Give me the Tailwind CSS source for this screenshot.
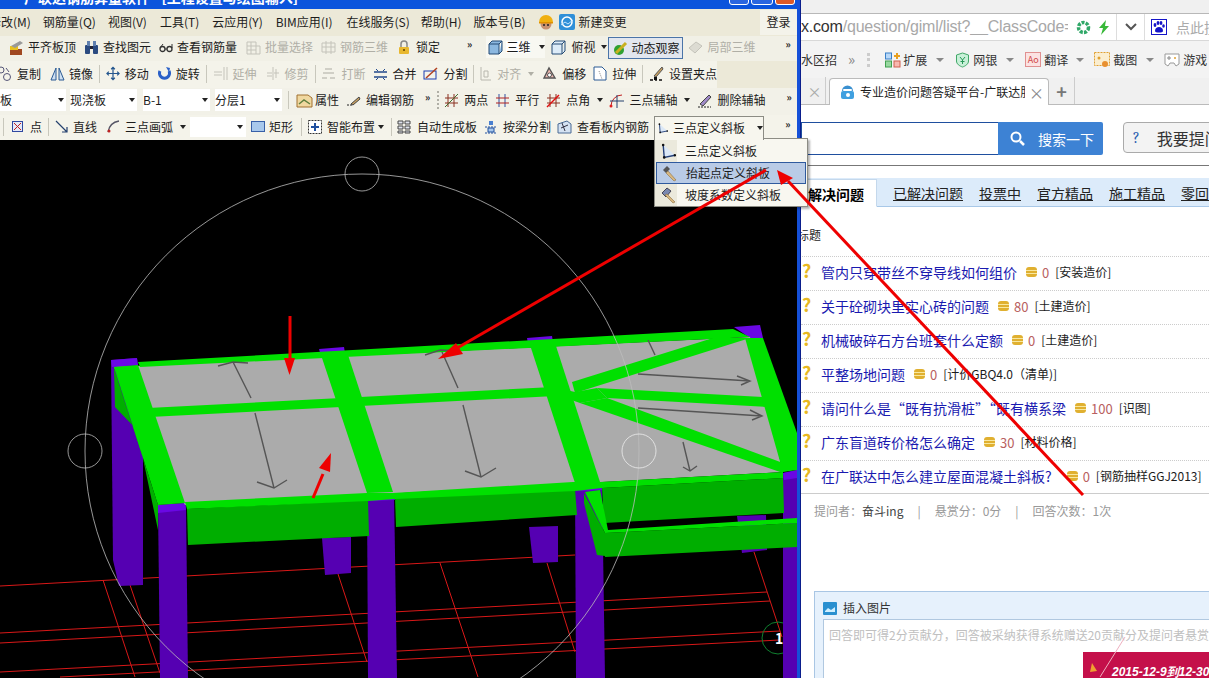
<!DOCTYPE html>
<html lang="zh">

<head>
    <meta charset="UTF-8">
    <title>广联达钢筋算量 - 三点定义斜板</title>
    <script src="https://cdn.jsdelivr.net/npm/@tailwindcss/browser@4"></script>
</head>

<body class="bg-black">
    <div class="relative flex w-[1209px] h-[678px] overflow-hidden text-[12px] leading-none text-[#1c1c1c] whitespace-nowrap font-['Noto_Sans_CJK_SC','Liberation_Sans',sans-serif]">

        <!-- left: drawing program -->
        <div class="flex flex-col w-[797px] shrink-0 bg-black">
            <div class="h-[9px] bg-[#0b54dc] overflow-hidden flex justify-between pr-[2px]">
                <span class="pl-[24px] -mt-[10px] text-[14px] font-bold text-white">广联达钢筋算量软件 - [工程设置与绘图输入]</span>
                <div class="flex gap-[2px] -mt-[6px]">
                    <span class="w-[20px] h-[11px] rounded-[3px] border border-white bg-[#2a66e0]"></span>
                    <span class="w-[22px] h-[11px] rounded-[3px] border border-white bg-[#2a66e0]"></span>
                    <span class="w-[20px] h-[11px] rounded-[3px] border border-white bg-[#dc5a28]"></span>
                </div>
            </div>

            <!-- menu -->
            <div class="h-[27px] bg-[#ece9d8] flex items-center gap-[12px] -ml-[11px] pb-[1px]">
                <span>修改(M)</span><span>钢筋量(Q)</span><span>视图(V)</span><span class="ml-px">工具(T)</span><span class="ml-px">云应用(Y)</span><span class="ml-px">BIM应用(I)</span><span class="ml-[2px]">在线服务(S)</span><span class="-ml-px">帮助(H)</span><span>版本号(B)</span>
                <svg class="w-[16px] h-[16px] shrink-0" viewBox="0 0 16 16"><circle cx="8" cy="10" r="5.500" fill="#c89070"/><path d="M1 8a7 7 0 0 1 14 0z" fill="#f0b010"/><path d="M1 8h14v1.500H1z" fill="#e09000"/><circle cx="6" cy="11" r="1" fill="#222"/><circle cx="10" cy="11" r="1" fill="#222"/></svg>
                <span class="flex items-center gap-[4px] -ml-[7px]">
                    <svg class="w-[16px] h-[16px]" viewBox="0 0 16 16"><rect width="16" height="16" rx="2" fill="#2f8fd8"/><circle cx="8" cy="8" r="5" fill="none" stroke="#fff" stroke-width="1.500"/><path d="M2 11l4-3 3 2 5-4" stroke="#bfe4ff" fill="none"/></svg>
                    新建变更
                </span>
                <span class="ml-auto bg-[#f4f3ea] h-[25px] w-[37px] flex items-center justify-center">登录</span>
            </div>

            <!-- row 2 -->
            <div class="h-[25px] bg-[#f1f0e6] flex items-center gap-[9px] pl-[8px] pb-[3px]">
                <span class="flex items-center gap-[4px]"><svg class="w-[16px] h-[15px]" viewBox="0 0 16 15"><rect x="2" y="9" width="12" height="6" fill="#a04820"/><rect x="2" y="6" width="8" height="4" fill="#e8c020"/><path d="M3 6l9-5 3 2-8 5z" fill="#9a9a9a"/></svg>平齐板顶</span>
                <span class="flex items-center gap-[4px] -ml-px"><svg class="w-[15px] h-[15px]" viewBox="0 0 15 15"><rect x="1" y="5" width="5" height="9" rx="1" fill="#2a4a80"/><rect x="9" y="5" width="5" height="9" rx="1" fill="#2a4a80"/><rect x="3" y="1" width="3" height="5" fill="#6080b0"/><rect x="9" y="1" width="3" height="5" fill="#6080b0"/><rect x="6" y="6" width="3" height="3" fill="#223"/></svg>查找图元</span>
                <span class="flex items-center gap-[4px] -ml-px"><svg class="w-[14px] h-[15px]" viewBox="0 0 14 15"><circle cx="3.500" cy="9" r="2.500" fill="none" stroke="#333" stroke-width="1.300"/><circle cx="10.500" cy="9" r="2.500" fill="none" stroke="#333" stroke-width="1.300"/><path d="M6 9h2M1 8l3-4M13 8V4" stroke="#333" fill="none"/></svg>查看钢筋量</span>
                <span class="flex items-center gap-[4px] text-[#b0afa6]"><svg class="w-[15px] h-[15px]" viewBox="0 0 15 15"><path d="M1 2h9v12H1zM1 6h9M1 10h9M5 2v12M10 6h4v8h-4" fill="none" stroke="#c4c3ba"/></svg>批量选择</span>
                <span class="flex items-center gap-[4px] text-[#b0afa6] -ml-px"><svg class="w-[15px] h-[15px]" viewBox="0 0 15 15"><path d="M1 3h13v9H1zM5 1v13M10 1v13M1 7h13" fill="none" stroke="#c4c3ba"/></svg>钢筋三维</span>
                <span class="flex items-center gap-[5px]"><svg class="w-[14px] h-[15px]" viewBox="0 0 14 15"><path d="M4 7V4a3 3 0 0 1 6 0v3" fill="none" stroke="#888" stroke-width="1.500"/><rect x="2" y="7" width="10" height="7" rx="1" fill="#e8b830"/><circle cx="7" cy="10" r="1" fill="#604000"/></svg>锁定</span>
                <span class="ml-[18px] text-[10px] font-bold -mt-[6px]">»</span>
                <div class="flex items-center h-[22px] bg-[#f8f8f2] ml-[5px] pl-[2px] gap-[9px]">
                    <span class="flex items-center gap-[3px]"><svg class="w-[15px] h-[15px]" viewBox="0 0 15 15"><path d="M1 4h10v10H1zM1 4l3-3h10l-3 3M11 14l3-3V1" fill="#8cb8e0" stroke="#244a74"/></svg><span class="bg-white">三维</span></span>
                    <span class="w-0 h-0 border-x-[3px] border-x-transparent border-t-[4px] border-t-[#222]"></span>
                </div>
                <span class="flex items-center gap-[5px] -ml-[3px]"><svg class="w-[15px] h-[15px]" viewBox="0 0 15 15"><path d="M1 4h10v10H1zM1 4l3-3h10l-3 3M11 14l3-3V1" fill="#dcebf8" stroke="#244a74"/></svg>俯视</span>
                <span class="w-0 h-0 border-x-[3px] border-x-transparent border-t-[4px] border-t-[#222] -ml-[3px]"></span>
                <span class="flex items-center gap-[3px] h-[22px] w-[75px] pl-[3px] mt-[2px] border border-[#4a74a8] bg-[#e2e6ee] -ml-[8px]"><svg class="w-[16px] h-[15px]" viewBox="0 0 16 15"><circle cx="7" cy="9" r="5" fill="#30a030"/><path d="M4 12L14 2" stroke="#c8b020" stroke-width="3"/></svg>动态观察</span>
                <span class="flex items-center gap-[4px] text-[#b0afa6] -ml-[4px]"><svg class="w-[15px] h-[15px]" viewBox="0 0 15 15"><path d="M1 8l7-6 6 4-7 7z" fill="#dcdbd2" stroke="#c4c3ba"/></svg>局部三维</span>
                <span class="ml-[21px] text-[10px] font-bold -mt-[6px]">»</span>
            </div>

            <!-- row 3 -->
            <div class="h-[27px] bg-[#ece9d8]">
                <div class="h-full w-[720px] bg-[#f4f3ea] flex items-center gap-[9px] -ml-[3px] pb-[2px]">
                    <span class="flex items-center gap-[5px]"><svg class="w-[15px] h-[15px]" viewBox="0 0 15 15"><circle cx="4" cy="4" r="3" fill="none" stroke="#557"/><circle cx="10" cy="11" r="3.500" fill="none" stroke="#557"/><path d="M9 2l3 4" stroke="#557"/></svg>复制</span>
                    <span class="flex items-center gap-[4px]"><svg class="w-[15px] h-[15px]" viewBox="0 0 15 15"><path d="M6 2v12H1zM9 2v12h5z" fill="#cfe0f2" stroke="#2a5a94"/></svg>镜像</span>
                    <span class="w-px h-[18px] bg-[#c8c7bc] -mx-[3px]"></span>
                    <span class="flex items-center gap-[5px]"><svg class="w-[14px] h-[15px]" viewBox="0 0 15 15"><path d="M7.500 1v13M1 7.500h13M5.500 3l2-2 2 2M5.500 12l2 2 2-2M3 5.500l-2 2 2 2M12 5.500l2 2-2 2" fill="none" stroke="#24568e" stroke-width="1.300"/></svg>移动</span>
                    <span class="flex items-center gap-[5px]"><svg class="w-[13px] h-[15px]" viewBox="0 0 13 15"><path d="M2 5a5 5 0 1 0 9 0" fill="none" stroke="#2a60c8" stroke-width="3"/><path d="M8 1l4 1-1 4z" fill="#2a60c8"/></svg>旋转</span>
                    <span class="w-px h-[18px] bg-[#c8c7bc] -mx-[3px]"></span>
                    <span class="flex items-center gap-[5px] text-[#b0afa6]"><svg class="w-[15px] h-[15px]" viewBox="0 0 15 15"><path d="M1 6h8M1 9h8M11 1v13M14 1v13" stroke="#c4c3ba" fill="none"/></svg>延伸</span>
                    <span class="flex items-center gap-[5px] text-[#b0afa6]"><svg class="w-[14px] h-[15px]" viewBox="0 0 14 15"><path d="M1 7h5M8 7h5M1 10h5M7 1v13M10 3v9" stroke="#c4c3ba" fill="none"/></svg>修剪</span>
                    <span class="w-px h-[18px] bg-[#c8c7bc] -mx-[3px]"></span>
                    <span class="flex items-center gap-[5px] text-[#b0afa6]"><svg class="w-[15px] h-[15px]" viewBox="0 0 15 15"><path d="M1 12h5M9 12h5M4 3h7M2 7h11" stroke="#c4c3ba" stroke-width="1.500" fill="none"/></svg>打断</span>
                    <span class="flex items-center gap-[4px] -ml-px"><svg class="w-[15px] h-[15px]" viewBox="0 0 15 15"><path d="M1 11h13M1 6h13" stroke="#224a8c" stroke-width="1.500"/><path d="M3 3l2 2M12 3l-2 2M3 14l2-2M12 14l-2-2" stroke="#224a8c"/></svg>合并</span>
                    <span class="flex items-center gap-[4px] -ml-[2px]"><svg class="w-[16px] h-[15px]" viewBox="0 0 16 15"><rect x="1" y="5" width="12" height="8" fill="none" stroke="#1a3cb0"/><path d="M3 12L14 2" stroke="#b04020" stroke-width="1.500"/></svg>分割</span>
                    <span class="w-px h-[18px] bg-[#c8c7bc] -mx-[3px]"></span>
                    <span class="flex items-center gap-[5px] text-[#b0afa6]"><svg class="w-[12px] h-[15px]" viewBox="0 0 12 15"><path d="M1 1v13h10M4 5h4v6H4z" stroke="#b8b7ae" fill="none"/></svg>对齐<span class="w-0 h-0 ml-[2px] border-x-[3px] border-x-transparent border-t-[4px] border-t-[#b0afa6]"></span></span>
                    <span class="flex items-center gap-[5px] -ml-px"><svg class="w-[15px] h-[15px]" viewBox="0 0 15 15"><path d="M2 12l5-10 6 10z" fill="#eeb8b0" stroke="#555" stroke-width="1.400"/><circle cx="7.500" cy="9" r="2" fill="#fff" stroke="#555"/></svg>偏移</span>
                    <span class="flex items-center gap-[4px] -ml-[2px]"><svg class="w-[15px] h-[15px]" viewBox="0 0 15 15"><path d="M1 1h8l4 4v9H1z" fill="#fff" stroke="#2a5a94"/><path d="M6 5l3 8" stroke="#888" stroke-dasharray="1 1"/></svg>拉伸</span>
                    <span class="w-px h-[18px] bg-[#c8c7bc] -mx-[3px]"></span>
                    <span class="flex items-center gap-[5px]"><svg class="w-[15px] h-[15px]" viewBox="0 0 15 15"><path d="M5 10L13 1l1 2-7 8z" fill="#c8a060" stroke="#555"/><path d="M1 14h3M6 14h2M10 14h3" stroke="#111" stroke-width="1.500"/><rect x="5" y="11" width="3" height="3" fill="#111"/></svg>设置夹点</span>
                </div>
            </div>

            <!-- row 4 -->
            <div class="h-[27px] bg-[#f2f1e8] flex items-center pb-[3px]">
                <span class="w-[66px] h-[22px] bg-white flex items-center justify-between pr-[2px] overflow-hidden"><span>板</span><span class="w-0 h-0 border-x-[3px] border-x-transparent border-t-[4px] border-t-[#222]"></span></span>
                <span class="ml-[4px] w-[67px] h-[22px] bg-white flex items-center justify-between pr-[2px]">现浇板<span class="w-0 h-0 border-x-[3px] border-x-transparent border-t-[4px] border-t-[#222]"></span></span>
                <span class="ml-[6px] w-[67px] h-[22px] bg-white flex items-center justify-between pr-[2px]">B-1<span class="w-0 h-0 border-x-[3px] border-x-transparent border-t-[4px] border-t-[#222]"></span></span>
                <span class="ml-[5px] w-[67px] h-[22px] bg-white flex items-center justify-between pr-[2px]">分层1<span class="w-0 h-0 border-x-[3px] border-x-transparent border-t-[4px] border-t-[#222]"></span></span>
                <span class="w-px h-[18px] bg-[#c8c7bc] ml-[6px]"></span>
                <span class="flex items-center gap-[2px] ml-[7px]"><svg class="w-[17px] h-[15px]" viewBox="0 0 17 15"><path d="M1 2h11l4 3v9H1z" fill="#f0d8a0" stroke="#a07030"/><path d="M3 11l5-4 6 4" stroke="#608040" fill="none" stroke-width="1.500"/></svg>属性</span>
                <span class="flex items-center gap-[5px] ml-[7px]"><svg class="w-[15px] h-[15px]" viewBox="0 0 15 15"><path d="M1 12h6" stroke="#222" stroke-dasharray="2 1"/><path d="M5 11L13 4l1 2-7 6z" fill="#c8a060" stroke="#444"/></svg>编辑钢筋</span>
                <span class="ml-[11px] text-[10px] font-bold -mt-[6px]">»</span>
                <span class="ml-[7px] w-[2px] h-[18px] border-l-2 border-dotted border-[#b0afa6]"></span>
                <span class="flex items-center gap-[5px] ml-[5px]"><svg class="w-[15px] h-[15px]" viewBox="0 0 15 15"><path d="M4 1v13M10 1v13M1 5h13M1 10h13" stroke="#8a3020"/><path d="M1 14L14 1" stroke="#407030"/></svg>两点</span>
                <span class="flex items-center gap-[5px] ml-[7px]"><svg class="w-[15px] h-[15px]" viewBox="0 0 15 15"><path d="M4 1v13M10 1v13" stroke="#3050a0"/><path d="M1 5h13M1 10h13" stroke="#b02020"/></svg>平行</span>
                <span class="flex items-center gap-[5px] ml-[7px]"><svg class="w-[15px] h-[15px]" viewBox="0 0 15 15"><path d="M4 1v13M10 1v13M1 5h13M1 10h13" stroke="#8a3020"/><path d="M1 14L13 2" stroke="#e01010" stroke-width="1.500"/></svg>点角</span>
                <span class="ml-[7px] w-0 h-0 border-x-[3px] border-x-transparent border-t-[4px] border-t-[#222]"></span>
                <span class="flex items-center gap-[5px] ml-[6px]"><svg class="w-[15px] h-[15px]" viewBox="0 0 15 15"><path d="M2 13a11 11 0 0 1 11-11" stroke="#c02020" fill="none"/><path d="M8 2v13M1 8h14" stroke="#24406e"/><circle cx="2" cy="13" r="1.500" fill="#e02020"/></svg>三点辅轴</span>
                <span class="ml-[7px] w-0 h-0 border-x-[3px] border-x-transparent border-t-[4px] border-t-[#222]"></span>
                <span class="flex items-center gap-[5px] ml-[7px]"><svg class="w-[15px] h-[15px]" viewBox="0 0 15 15"><path d="M1 14h13" stroke="#222" stroke-dasharray="2 1"/><path d="M3 11L12 2l2 2-8 9z" fill="#a08ac8" stroke="#444"/></svg>删除辅轴</span>
                <span class="ml-[21px] text-[10px] font-bold -mt-[6px]">»</span>
            </div>

            <!-- row 5 -->
            <div class="h-[25px] bg-[#f4f3ea] flex items-center pb-[2px]">
                <span class="w-px h-[18px] bg-[#c8c7bc] ml-[3px]"></span>
                <span class="flex items-center gap-[7px] ml-[8px]"><svg class="w-[11px] h-[11px]" viewBox="0 0 11 11"><rect x=".5" y=".5" width="10" height="10" fill="#e4e8f8" stroke="#3048a0"/><path d="M2 2l7 7M9 2l-7 7" stroke="#c02020"/></svg>点</span>
                <span class="w-px h-[18px] bg-[#c8c7bc] ml-[6px]"></span>
                <span class="flex items-center gap-[5px] ml-[6px]"><svg class="w-[13px] h-[13px]" viewBox="0 0 13 13"><path d="M1 1l11 11M12 7v5H7" stroke="#24406e" fill="none" stroke-width="1.200"/></svg>直线</span>
                <span class="flex items-center gap-[5px] ml-[10px]"><svg class="w-[13px] h-[13px]" viewBox="0 0 13 13"><path d="M1 12C2 6 6 2 12 1" stroke="#556" fill="none" stroke-width="1.300"/><circle cx="2" cy="11" r="1.500" fill="#c02020"/></svg>三点画弧</span>
                <span class="ml-[7px] w-0 h-0 border-x-[3px] border-x-transparent border-t-[4px] border-t-[#222]"></span>
                <span class="ml-[4px] w-[56px] h-[20px] bg-white flex items-center justify-end pr-[3px]"><span class="w-0 h-0 border-x-[3px] border-x-transparent border-t-[4px] border-t-[#222]"></span></span>
                <span class="flex items-center gap-[4px] ml-[5px]"><svg class="w-[14px] h-[11px]" viewBox="0 0 14 11"><rect x=".5" y=".5" width="13" height="10" fill="#a8c8ec" stroke="#3860a8"/></svg>矩形</span>
                <span class="w-px h-[18px] bg-[#c8c7bc] ml-[8px]"></span>
                <span class="flex items-center gap-[5px] ml-[6px]"><svg class="w-[14px] h-[14px]" viewBox="0 0 14 14"><rect x=".5" y=".5" width="13" height="13" fill="#fff" stroke="#333" stroke-dasharray="2 1"/><path d="M7 3v8M3 7h8" stroke="#2050a0" stroke-width="2"/></svg>智能布置</span>
                <span class="ml-[3px] w-0 h-0 border-x-[3px] border-x-transparent border-t-[4px] border-t-[#222]"></span>
                <span class="w-px h-[18px] bg-[#c8c7bc] ml-[7px]"></span>
                <span class="flex items-center gap-[6px] ml-[5px]"><svg class="w-[14px] h-[14px]" viewBox="0 0 14 14"><path d="M1 1h5v3H1zM8 1h5v3H8zM1 6h5v3H1zM8 6h5v3H8zM1 11h5v2H1zM8 11h5v2H8z" fill="#e0e4ee" stroke="#444"/></svg>自动生成板</span>
                <span class="flex items-center gap-[5px] ml-[7px]"><svg class="w-[14px] h-[14px]" viewBox="0 0 14 14"><rect x="5" y="1" width="4" height="4" fill="#4a80d0"/><path d="M1 7h12M1 13h12" stroke="#2050a0" stroke-dasharray="2 1"/><rect x="4" y="8" width="6" height="4" fill="#a8c8ec" stroke="#2050a0"/></svg>按梁分割</span>
                <span class="flex items-center gap-[5px] ml-[6px]"><svg class="w-[15px] h-[14px]" viewBox="0 0 15 14"><path d="M1 4l9-3 4 3v9H1z" fill="#d4e2f2" stroke="#4a6a94"/><path d="M5 3l3 8M4 8l7-3" stroke="#334" fill="none"/></svg>查看板内钢筋</span>
                <span class="ml-[5px] relative z-20 h-[24px] w-[110px] self-start mt-[1px] flex items-center pl-[3px] pb-[1px] gap-[5px] bg-[#f7f6ee] border border-b-0 border-[#8c8c84]"><svg class="w-[14px] h-[15px]" viewBox="0 0 14 15"><path d="M2 1l1 12 10-2" fill="#dce8f6" stroke="#24407a" stroke-width="1.300"/><circle cx="2" cy="1.500" r="1.200" fill="#111"/><circle cx="3" cy="13" r="1.200" fill="#111"/><circle cx="13" cy="11" r="1.200" fill="#111"/></svg>三点定义斜板<span class="ml-[7px] w-0 h-0 border-x-[3px] border-x-transparent border-t-[4px] border-t-[#222]"></span></span>
                <span class="ml-[21px] text-[10px] font-bold -mt-[6px]">»</span>
            </div>

            <!-- 3d view -->
            <svg class="w-[797px] h-[538px] block" viewBox="0 140 797 538">
                <g stroke="#d81818" stroke-width="1" fill="none">
                    <path d="M0 586L575 555M0 633L767 592M0 643L770 601M0 672L780 631M60 677L780 640"/>
                    <path d="M103 580L135 677M130 585L160 673M338 574L367 662M440 563L478 677M547 563L575 652M754 552L782 637"/>
                </g>
                <circle cx="778" cy="638" r="16" fill="none" stroke="#108030"/>
                <text x="775" y="644" fill="#fff" font-size="14" font-weight="bold">1</text>

                <!-- columns -->
                <g fill="#5500b2">
                    <path d="M111 360L137 358L143 430V585L119 586L113 560z"/>
                    <path d="M322 538L351 537V573L325 575z"/>
                    <path d="M529 527L558 526V562L533 563z"/>
                    <path d="M737 516L766 515L767 550L742 553z"/>
                    <path d="M158 505L186 503L188 678H160z"/>
                    <path d="M367 493L394 492L397 678H368z"/>
                    <path d="M575 483L602 482L605 678H576z"/>
                    <path d="M783 473L797 470V678H783z"/>
                </g>
                <g fill="#6a08e4">
                    <path d="M111 360L137 358L138 365L112 367z"/>
                    <path d="M319 349L344 347L345 353L321 356z"/>
                    <path d="M527 338L552 336L553 342L528 344z"/>
                    <path d="M734 327L760 325L763 338H750z"/>
                    <path d="M158 505L185 503L186 510L158 513z"/>
                    <path d="M367 493L393 492L395 500L368 501z"/>
                    <path d="M575 483L600 482L602 490L576 491z"/>
                    <path d="M783 473L797 470V478L784 480z"/>
                </g>

                <!-- slab -->
                <path d="M114 367L750 337L783 472L185 505z" fill="#ababab"/>

                <!-- beam sides -->
                <g fill="#00ae00">
                    <path d="M114 368L115 407L137 430L158 530V505z"/>
                    <path d="M187 509L368 500L369 536L188 545z"/>
                    <path d="M395 498L575 489L577 515L396 527z"/>
                    <path d="M602 488L783 478L784 513L604 523z"/>
                </g>

                <!-- beam tops -->
                <g fill="#00e000">
                    <path d="M138 362L733 329L750 337L140 367z"/>
                    <path d="M148 408L553 387L555 396L150 417z"/>
                    <path d="M114 367L138 365L185 503L158 505z"/>
                    <path d="M321 355L348 355L393 492L367 493z"/>
                    <path d="M530 345L555 343L600 482L575 483z"/>
                    <path d="M745 338L763 338L797 433V470L783 472z"/>
                    <path d="M572 382L713 338H750L575 393z"/>
                    <path d="M597 388L763 397L767 407L607 398z"/>
                    <path d="M580 403L607 398L783 463V473z"/>
                    <path d="M553 387L575 392L597 388L607 398L580 403L560 396z"/>
                    <path d="M185 502L367 493H393L573 482H600L783 472V478L602 488L575 491L395 499L368 501L187 509z"/>
                </g>

                <!-- load arrows -->
                <g stroke="#555" stroke-width="1.400" fill="none">
                    <path d="M218 366L233 362L248 363M233 362L251 398M255 413L274 488M257 482L274 488L287 480"/>
                    <path d="M425 355L440 350L458 351M442 352L458 388M463 405L481 477M465 471L481 477L496 468"/>
                    <path d="M648 340L655 355"/>
                    <path d="M638 374L750 381M737 376L750 381L741 385"/>
                    <path d="M638 408L762 416M750 410L762 416L752 420"/>
                    <path d="M683 442L690 471M683 467L690 471L697 466"/>
                </g>

                <!-- front extension -->
                <path d="M584 493L584 503L597 555L605 556V533z" fill="#00ae00"/>
                <path d="M605 533L797 523V547L605 557z" fill="#00ae00"/>
                <path d="M585 492L600 490L608 530L797 518V523L605 533z" fill="#00e000"/>

                <!-- orbit gizmo -->
                <g fill="none" stroke="#bdbdbd" stroke-width=".8">
                    <circle cx="362" cy="451" r="277"/>
                    <circle cx="362" cy="174" r="17"/>
                    <circle cx="85" cy="451" r="17"/>
                    <circle cx="639" cy="451" r="17" stroke="#eee"/>
                </g>
            </svg>
        </div>

        <!-- window edge -->
        <div class="w-[3px] shrink-0 bg-[#1550d8]"></div>
        <div class="w-px shrink-0 bg-[#0a1e8c]"></div>

        <!-- right: browser -->
        <div class="flex-1 min-w-0 flex flex-col bg-white overflow-hidden">
            <div class="h-[14px] bg-[#f0f0f0] border-b border-[#b8b8b8] shrink-0"></div>
            <div class="h-[27px] bg-white border-b border-[#d8d8d8] flex items-center shrink-0">
                <div class="w-[267px] shrink-0 overflow-hidden text-[16px] font-['Liberation_Sans',sans-serif] text-[#a8a8a8] tracking-[-0.2px]"><span class="text-[#333]">x.com</span>/question/giml/list?__ClassCode=-18</div>
                <svg class="w-[15px] h-[15px] shrink-0 ml-[8px]" viewBox="0 0 15 15"><circle cx="7.500" cy="7.500" r="5" fill="none" stroke="#30a868" stroke-width="3.500" stroke-dasharray="3 1.200"/></svg>
                <svg class="w-[12px] h-[15px] shrink-0 ml-[7px]" viewBox="0 0 12 15"><path d="M8 0L1 8h4l-2 7 8-9H7z" fill="#38b838"/></svg>
                <span class="w-px h-[26px] shrink-0 bg-[#ddd] ml-[6px]"></span>
                <svg class="w-[14px] h-[10px] shrink-0 ml-[7px]" viewBox="0 0 14 10"><path d="M2 2l5 5 5-5" fill="none" stroke="#555" stroke-width="2"/></svg>
                <span class="w-px h-[26px] shrink-0 bg-[#ddd] ml-[6px]"></span>
                <svg class="w-[16px] h-[16px] shrink-0 ml-[6px]" viewBox="0 0 16 16"><rect x=".5" y=".5" width="15" height="15" fill="#fff" stroke="#1414c8"/><g fill="#1414c8"><ellipse cx="4" cy="6" rx="1.400" ry="2"/><ellipse cx="7" cy="4" rx="1.400" ry="2"/><ellipse cx="10" cy="4" rx="1.400" ry="2"/><ellipse cx="12.500" cy="7" rx="1.300" ry="1.800"/><path d="M4 12c0-3 2-4 4-4s4 1 4 4c0 2-8 2-8 0z"/></g></svg>
                <span class="ml-[9px] text-[14px] text-[#aaa] shrink-0">点此搜</span>
            </div>
            <div class="h-[37px] bg-[#f3f3f3] flex items-center text-[#333] text-[12px] shrink-0">
                <span class="shrink-0">水区招</span>
                <span class="ml-[11px] text-[#888] text-[15px] -mt-[3px] shrink-0">»</span>
                <span class="ml-[12px] w-[3px] h-[14px] shrink-0 border-l-[3px] border-dotted border-[#ccc]"></span>
                <span class="flex items-center gap-[2px] ml-[15px] shrink-0"><svg class="w-[16px] h-[16px]" viewBox="0 0 16 16"><rect x=".5" y="1" width="6" height="6" fill="#b8d8f8" stroke="#3a80c8"/><rect x=".5" y="9" width="6" height="6" fill="#98d8a0" stroke="#40a050"/><rect x="9" y="9" width="6" height="6" fill="#f8b8b0" stroke="#d06050"/><path d="M12 1v6M9 4h6" stroke="#e8a020" stroke-width="2"/></svg>扩展</span>
                <span class="ml-[9px] shrink-0 w-0 h-0 border-x-[4px] border-x-transparent border-t-[4px] border-t-[#888]"></span>
                <span class="flex items-center gap-[3px] ml-[11px] shrink-0"><svg class="w-[15px] h-[16px]" viewBox="0 0 15 16"><path d="M7.500 1l6 2v6c0 3-3 5-6 6-3-1-6-3-6-6V3z" fill="#c8f0d8" stroke="#40a868"/><path d="M5 5l2.500 3L10 5M7.500 8v4M5.500 9.500h4" stroke="#289858" fill="none"/></svg>网银</span>
                <span class="ml-[9px] shrink-0 w-0 h-0 border-x-[4px] border-x-transparent border-t-[4px] border-t-[#888]"></span>
                <span class="flex items-center gap-[3px] ml-[11px] shrink-0"><span class="w-[16px] h-[15px] bg-[#fbe2e2] border border-[#e09090] text-[#d04848] text-[9px] flex items-center justify-center">Ao</span>翻译</span>
                <span class="ml-[8px] shrink-0 w-0 h-0 border-x-[4px] border-x-transparent border-t-[4px] border-t-[#888]"></span>
                <span class="flex items-center gap-[3px] ml-[10px] shrink-0"><svg class="w-[16px] h-[16px]" viewBox="0 0 16 16"><rect x=".5" y=".5" width="15" height="13" fill="#fbeed0" stroke="#e0a030" stroke-dasharray="2 1"/><circle cx="11" cy="12" r="3" fill="#e89030"/><circle cx="5" cy="6" r="1.500" fill="#e0a030"/></svg>截图</span>
                <span class="ml-[9px] shrink-0 w-0 h-0 border-x-[4px] border-x-transparent border-t-[4px] border-t-[#888]"></span>
                <span class="flex items-center gap-[3px] ml-[10px] shrink-0"><svg class="w-[16px] h-[15px]" viewBox="0 0 16 15"><path d="M1 2h14v10l-3 2-2-3H6l-2 3-3-2z" fill="#fff" stroke="#999"/><circle cx="11" cy="6" r="1" fill="#e0a030"/><path d="M3 6h4M5 4v4" stroke="#888"/></svg>游戏</span>
            </div>
            <div class="h-[27px] bg-[#f0f0f0] border-b border-[#bbb] flex items-end shrink-0">
                <div class="w-[25px] h-[27px] shrink-0 border-r border-[#ccc] flex items-center justify-center text-[#aaa] text-[14px] pl-[3px]">×</div>
                <div class="ml-[3px] w-[220px] h-[27px] shrink-0 bg-white border border-b-0 border-[#bbb] rounded-t-[4px] flex items-center pl-[10px] -mb-px">
                    <svg class="w-[15px] h-[16px] shrink-0" viewBox="0 0 15 16"><path d="M2 7a5.500 5.500 0 0 1 11 0z" fill="#3a90d0"/><rect x="1" y="7" width="13" height="8" rx="2" fill="#40a0e0"/><rect x="3" y="5" width="9" height="2" rx="1" fill="#fff"/><circle cx="8" cy="11" r="2" fill="#fff"/></svg>
                    <span class="ml-[5px] w-[165px] shrink-0 overflow-hidden">专业造价问题答疑平台-广联达服</span>
                    <span class="ml-[4px] text-[#888] text-[15px]">×</span>
                </div>
                <div class="w-[26px] h-[27px] shrink-0 border-r border-[#ccc] flex items-center justify-center text-[#777] text-[18px] font-bold">+</div>
            </div>

            <!-- question page -->
            <div class="h-[61px] border-b border-[#777] flex items-start pt-[17px] shrink-0">
                <div class="w-[197px] h-[33px] shrink-0 border border-r-0 border-[#1f4f9f]"></div>
                <div class="w-[105px] h-[33px] shrink-0 bg-[#3d82d4] rounded-r-[2px] flex items-center pl-[12px] gap-[13px] text-white text-[14px]">
                    <svg class="w-[15px] h-[15px]" viewBox="0 0 15 15"><circle cx="6" cy="6" r="4.500" fill="none" stroke="#fff" stroke-width="2"/><path d="M10 10l4 4" stroke="#fff" stroke-width="2.500"/></svg>
                    搜索一下
                </div>
                <div class="ml-[20px] w-[110px] h-[31px] shrink-0 rounded-[4px] border border-[#aaa] bg-[#f3f3f3] flex items-center pl-[9px] text-[16px] text-[#333]"><span class="text-[#2a60b0] font-serif mr-[17px]">?</span>我要提问</div>
            </div>
            <div class="h-[29px] mt-[12px] bg-[#dcebfa] border-b border-[#a8c8e8] flex items-end text-[14px] shrink-0">
                <div class="w-[76px] h-[28px] shrink-0 -mb-px bg-white border border-[#c4d8ec] border-b-white flex items-center pl-[6px] pt-[2px] font-bold text-black">解决问题</div>
                <div class="h-[28px] flex items-center gap-[16px] pl-[16px] pt-[2px] underline text-[#222]">
                    <span>已解决问题</span><span>投票中</span><span>官方精品</span><span>施工精品</span><span>零回答</span>
                </div>
            </div>

            <div class="h-[50px] pt-[22px] border-b border-dotted border-[#ccc] -ml-[4px] shrink-0">标题</div>

            <div class="flex items-center h-[34px] pb-[3px] border-b border-dotted border-[#ccc] shrink-0"><span class="w-[20px] -mt-[5px] pl-[1px] text-[18px] font-bold text-[#e8b820]">?</span><span class="text-[14px] text-[#1a1ab0]">管内只穿带丝不穿导线如何组价</span><svg class="w-[11px] h-[10px] ml-[9px]" viewBox="0 0 11 10"><rect width="11" height="10" rx="3" fill="#e0b030"/><path d="M0 3.500h11M0 6.500h11" stroke="#f8e8a0"/></svg><span class="ml-[5px] text-[#b86060] text-[13px]">0</span><span class="ml-[6px]">[安装造价]</span></div>
            <div class="flex items-center h-[34px] pb-[3px] border-b border-dotted border-[#ccc] shrink-0"><span class="w-[20px] -mt-[5px] pl-[1px] text-[18px] font-bold text-[#e8b820]">?</span><span class="text-[14px] text-[#1a1ab0]">关于砼砌块里实心砖的问题</span><svg class="w-[11px] h-[10px] ml-[9px]" viewBox="0 0 11 10"><rect width="11" height="10" rx="3" fill="#e0b030"/><path d="M0 3.500h11M0 6.500h11" stroke="#f8e8a0"/></svg><span class="ml-[5px] text-[#b86060] text-[13px]">80</span><span class="ml-[6px]">[土建造价]</span></div>
            <div class="flex items-center h-[34px] pb-[3px] border-b border-dotted border-[#ccc] shrink-0"><span class="w-[20px] -mt-[5px] pl-[1px] text-[18px] font-bold text-[#e8b820]">?</span><span class="text-[14px] text-[#1a1ab0]">机械破碎石方台班套什么定额</span><svg class="w-[11px] h-[10px] ml-[9px]" viewBox="0 0 11 10"><rect width="11" height="10" rx="3" fill="#e0b030"/><path d="M0 3.500h11M0 6.500h11" stroke="#f8e8a0"/></svg><span class="ml-[5px] text-[#b86060] text-[13px]">0</span><span class="ml-[6px]">[土建造价]</span></div>
            <div class="flex items-center h-[34px] pb-[3px] border-b border-dotted border-[#ccc] shrink-0"><span class="w-[20px] -mt-[5px] pl-[1px] text-[18px] font-bold text-[#e8b820]">?</span><span class="text-[14px] text-[#1a1ab0]">平整场地问题</span><svg class="w-[11px] h-[10px] ml-[9px]" viewBox="0 0 11 10"><rect width="11" height="10" rx="3" fill="#e0b030"/><path d="M0 3.500h11M0 6.500h11" stroke="#f8e8a0"/></svg><span class="ml-[5px] text-[#b86060] text-[13px]">0</span><span class="ml-[6px]">[计价GBQ4.0（清单)]</span></div>
            <div class="flex items-center h-[34px] pb-[3px] border-b border-dotted border-[#ccc] shrink-0"><span class="w-[20px] -mt-[5px] pl-[1px] text-[18px] font-bold text-[#e8b820]">?</span><span class="text-[14px] text-[#1a1ab0]">请问什么是“既有抗滑桩”“既有横系梁</span><svg class="w-[11px] h-[10px] ml-[9px]" viewBox="0 0 11 10"><rect width="11" height="10" rx="3" fill="#e0b030"/><path d="M0 3.500h11M0 6.500h11" stroke="#f8e8a0"/></svg><span class="ml-[5px] text-[#b86060] text-[13px]">100</span><span class="ml-[6px]">[识图]</span></div>
            <div class="flex items-center h-[34px] pb-[3px] border-b border-dotted border-[#ccc] shrink-0"><span class="w-[20px] -mt-[5px] pl-[1px] text-[18px] font-bold text-[#e8b820]">?</span><span class="text-[14px] text-[#1a1ab0]">广东盲道砖价格怎么确定</span><svg class="w-[11px] h-[10px] ml-[9px]" viewBox="0 0 11 10"><rect width="11" height="10" rx="3" fill="#e0b030"/><path d="M0 3.500h11M0 6.500h11" stroke="#f8e8a0"/></svg><span class="ml-[5px] text-[#b86060] text-[13px]">30</span><span class="ml-[6px]">[材料价格]</span></div>
            <div class="flex items-center h-[33px] pb-[2px] border-b border-[#ccc] shrink-0"><span class="w-[20px] -mt-[5px] pl-[1px] text-[18px] font-bold text-[#e8b820]">?</span><span class="text-[14px] text-[#1a1ab0]">在广联达中怎么建立屋面混凝土斜板?</span><svg class="w-[11px] h-[10px] ml-[15px]" viewBox="0 0 11 10"><rect width="11" height="10" rx="3" fill="#e0b030"/><path d="M0 3.500h11M0 6.500h11" stroke="#f8e8a0"/></svg><span class="ml-[5px] text-[#b86060] text-[13px]">0</span><span class="ml-[6px]">[钢筋抽样GGJ2013]</span></div>

            <div class="pl-[13px] pt-[11px] h-[97px] text-[#999] shrink-0">提问者：<span class="text-[#444]">奋斗ing</span><span class="mx-[14px]">|</span>悬赏分：0分<span class="mx-[14px]">|</span>回答次数：1次</div>

            <div class="ml-[13px] flex-1 bg-[#e6f1fc] border-t border-l border-[#a9c6e4] pl-[8px] pt-[9px]">
                <div class="flex items-center gap-[6px] h-[14px]">
                    <svg class="w-[14px] h-[13px]" viewBox="0 0 14 13"><rect width="14" height="13" rx="1" fill="#2a90d0"/><path d="M2 9l3-3 3 2 4-3v5H2z" fill="#cfefff"/></svg>
                    <span class="text-[#333]">插入图片</span>
                </div>
                <div class="relative mt-[4px] h-[60px] bg-white border-t border-l border-[#b0c8e0] pl-[5px] pt-[9px] text-[#c0c0c0] text-[12px] overflow-hidden">
                    回答即可得2分贡献分，回答被采纳获得系统赠送20贡献分及提问者悬赏
                    <div class="absolute left-[259px] top-[32px] w-[140px] h-[30px] bg-[#c4104a] flex items-start pl-[6px] pt-[14px] gap-[14px]">
                        <svg class="w-[9px] h-[11px] -mt-[4px]" viewBox="0 0 9 11"><path d="M1 10L3 1l5 8z" fill="#f0a030"/></svg>
                        <span class="text-white font-bold italic text-[12px] font-['Liberation_Sans',sans-serif]">2015-12-9到12-30</span>
                    </div>
                </div>
            </div>
        </div>

        <!-- slab type menu -->
        <div class="absolute left-[654px] top-[138px] z-10 w-[154px] h-[69px] bg-[#f8f7f0] border border-[#8c8c84] shadow-[2px_2px_2px_rgba(0,0,0,0.3)]">
            <div class="absolute left-0 top-0 bottom-0 w-[22px] bg-[#ebe9dc]"></div>
            <div class="relative flex flex-col pt-px">
                <div class="h-[22px] flex items-center gap-[9px] pl-[6px]"><svg class="w-[15px] h-[17px]" viewBox="0 0 14 15"><path d="M2 1l1 12 10-2" fill="#dce8f6" stroke="#24407a" stroke-width="1.300"/><circle cx="2" cy="1.500" r="1.200" fill="#111"/><circle cx="3" cy="13" r="1.200" fill="#111"/><circle cx="13" cy="11" r="1.200" fill="#111"/></svg>三点定义斜板</div>
                <div class="h-[22px] mx-px flex items-center gap-[9px] pl-[5px] bg-[#b9cbe6] border border-[#2f5a9e]"><svg class="w-[15px] h-[17px]" viewBox="0 0 15 17"><path d="M1 5l4-4 3 3-4 4z" fill="#555"/><path d="M6 6l8 9-2 1-8-8z" fill="#d8b880" stroke="#806030" stroke-width=".5"/></svg>抬起点定义斜板</div>
                <div class="h-[22px] flex items-center gap-[9px] pl-[6px]"><svg class="w-[15px] h-[17px]" viewBox="0 0 15 17"><path d="M1 6l5-5 4 3-5 6z" fill="#7a88b0" stroke="#445"/><path d="M6 7l8 8-2 1-8-8z" fill="#d8b880" stroke="#806030" stroke-width=".5"/></svg>坡度系数定义斜板</div>
            </div>
        </div>

        <!-- red annotations, drawn over both windows -->
        <svg class="absolute left-0 top-0 z-20 w-[1209px] h-[678px] pointer-events-none" viewBox="0 0 1209 678">
            <g stroke="#ee0000" stroke-width="3" fill="none">
                <path d="M290 316V360"/>
                <path d="M313 498L323 474"/>
                <path d="M766 170L452 351"/>
                <path d="M1083 495L788 181"/>
            </g>
            <g fill="#ee0000">
                <path d="M284 358H295L289.500 375z"/>
                <path d="M319 468L331 453L330 472z"/>
                <path d="M438 359L456 343L463 354z"/>
                <path d="M777 170L781 185L793 178z"/>
            </g>
            <path d="M1125 637L1100 677" stroke="#eeb0c0" fill="none"/>
        </svg>
    </div>
</body>

</html>
